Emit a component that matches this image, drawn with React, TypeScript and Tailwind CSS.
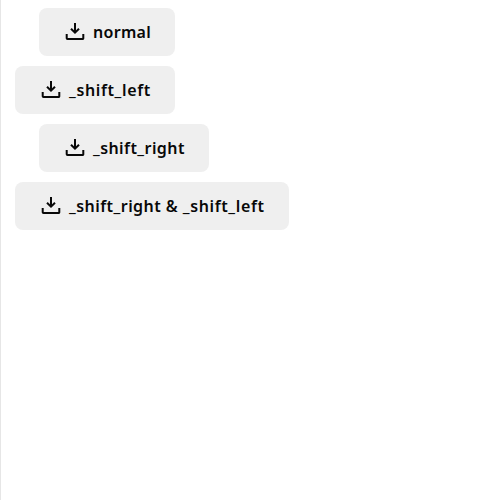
import React from "react";

function DownloadIcon() {
  return (
    <svg width="24" height="24" viewBox="0 0 24 24" fill="none" stroke="#080808" strokeWidth="2" className="shrink-0">
      <path d="M12 3v9.5M8 8.8l4 3.9 4-3.9M3.7 14v4.2a.8.8 0 0 0 .8.8h15a.8.8 0 0 0 .8-.8V14" />
    </svg>
  );
}

function Button({ children, size }: { children: React.ReactNode; size: string }) {
  return (
    <button className={`flex h-12 items-center gap-1.5 rounded-lg bg-[#efefef] pl-6 text-base font-semibold whitespace-nowrap text-[#080808] ${size}`}>
      <DownloadIcon />
      <span>{children}</span>
    </button>
  );
}

export default function App() {
  return (
    <main className="flex h-screen flex-col items-start gap-2.5 border-l border-[#e6e6e6] bg-white pt-2 font-['Noto_Sans',sans-serif]">
      <Button size="ml-[38px] w-[136px]">
        <span className="tracking-[0.3px]">normal</span>
      </Button>
      <Button size="ml-3.5 w-[160px]">
        <span className="tracking-[0.63px]">_shift_left</span>
      </Button>
      <Button size="ml-[38px] w-[170px]">
        <span className="tracking-[0.42px]">_shift_right</span>
      </Button>
      <Button size="ml-3.5 w-[274px]">
        <span className="tracking-[0.45px]">_shift_right &amp; </span>
        <span className="tracking-[0.63px]">_shift_left</span>
      </Button>
    </main>
  );
}
